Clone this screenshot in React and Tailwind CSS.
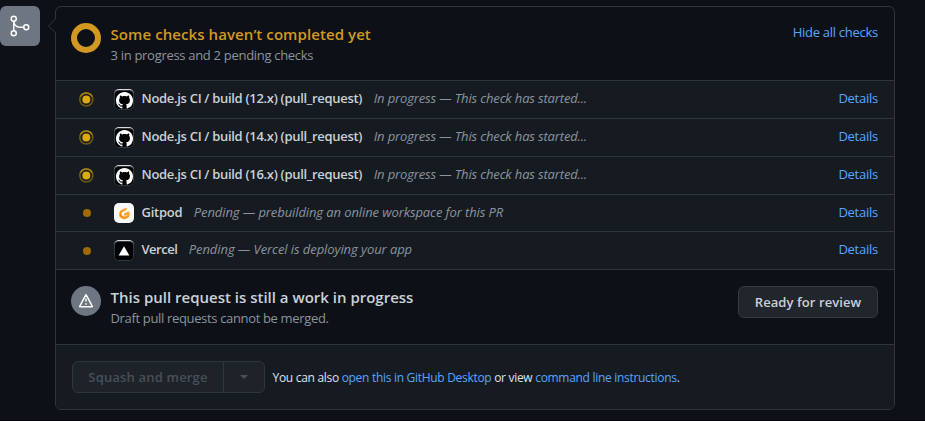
import { GoGitMerge } from "react-icons/go";

function RunningIcon() {
  return (
    <svg className="size-4 shrink-0" viewBox="0 0 16 16" fill="none">
      <circle cx="8.3" cy="7.5" r="6.5" stroke="#6f5713" strokeWidth="1.6" />
      <path d="M2.5 4.5a6.5 6.5 0 0 1 11.6 0" stroke="#a88412" strokeWidth="1.6" />
      <circle cx="8.3" cy="7.5" r="4" fill="#dbab0a" />
    </svg>
  );
}

function PendingDot() {
  return <span className="mr-[3px] ml-[5px] size-2 shrink-0 rounded-full bg-[#9e6a03]" />;
}

function GithubAvatar() {
  return (
    <span className="flex h-[21px] w-5 items-center justify-center rounded-[5px] border-t border-t-[#d8dadc] bg-black ring-1 ring-[#33383e] ring-inset">
      <svg className="size-[17px] shrink-0" viewBox="0 0 16 16" fill="#fff">
        <path d="M8 0C3.58 0 0 3.58 0 8c0 3.54 2.29 6.53 5.47 7.59.4.07.55-.17.55-.38 0-.19-.01-.82-.01-1.49-2.01.37-2.53-.49-2.69-.94-.09-.23-.48-.94-.82-1.13-.28-.15-.68-.52-.01-.53.63-.01 1.08.58 1.23.82.72 1.21 1.87.87 2.33.66.07-.52.28-.87.51-1.07-1.78-.2-3.64-.89-3.64-3.95 0-.87.31-1.59.82-2.15-.08-.2-.36-1.02.08-2.12 0 0 .67-.21 2.2.82.64-.18 1.32-.27 2-.27s1.36.09 2 .27c1.53-1.04 2.2-.82 2.2-.82.44 1.1.16 1.92.08 2.12.51.56.82 1.27.82 2.15 0 3.07-1.87 3.75-3.65 3.95.29.25.54.73.54 1.48 0 1.07-.01 1.93-.01 2.2 0 .21.15.46.55.38A8.01 8.01 0 0 0 16 8c0-4.42-3.58-8-8-8z" />
      </svg>
    </span>
  );
}

function GitpodAvatar() {
  return (
    <span className="flex size-5 items-center justify-center rounded-[5px] bg-[#f9f9f9]">
      <svg className="size-[13px]" viewBox="0 0 14 14" fill="none" stroke="url(#gitpod)" strokeWidth="2.5" strokeLinecap="round" strokeLinejoin="round">
        <defs>
          <linearGradient id="gitpod" x1="1" y1="0" x2="0" y2="1">
            <stop offset="0" stopColor="#ffb03a" />
            <stop offset="1" stopColor="#ff8a00" />
          </linearGradient>
        </defs>
        <path d="M8.4 2.2 3.5 4.9Q2.7 5.4 2.7 6.2v2.7q0 .8.7 1.2L6.3 11.7q.7.4 1.4 0l2.9-1.6q.7-.4.7-1.2V6L7.5 8" />
      </svg>
    </span>
  );
}

function VercelAvatar() {
  return (
    <span className="flex h-[21px] w-5 items-center justify-center rounded-[5px] border-t border-t-[#d8dadc] bg-black ring-1 ring-[#33383e] ring-inset">
      <svg className="size-3" viewBox="0 0 12 12" fill="#fff">
        <path d="M6 1.2 11.4 10.6H.6z" />
      </svg>
    </span>
  );
}

const started = "In progress — This check has started...";

const checks = [
  { name: "Node.js CI / build (12.x) (pull_request)", note: started, icon: RunningIcon, avatar: GithubAvatar, row: "h-[38px]", lift: "pb-0.5", nameCls: "tracking-[-0.3px]", noteCls: "tracking-[-0.15px]" },
  { name: "Node.js CI / build (14.x) (pull_request)", note: started, icon: RunningIcon, avatar: GithubAvatar, row: "h-[38px]", lift: "pb-0.5", nameCls: "tracking-[-0.3px]", noteCls: "tracking-[-0.15px]" },
  { name: "Node.js CI / build (16.x) (pull_request)", note: started, icon: RunningIcon, avatar: GithubAvatar, row: "h-[38px]", lift: "pb-0.5", nameCls: "tracking-[-0.3px]", noteCls: "tracking-[-0.15px]" },
  { name: "Gitpod", note: "Pending — prebuilding an online workspace for this PR", icon: PendingDot, avatar: GitpodAvatar, row: "h-[37px]", lift: "pb-0", nameCls: "tracking-[-0.25px]", noteCls: "tracking-[-0.1px]" },
  { name: "Vercel", note: "Pending — Vercel is deploying your app", icon: PendingDot, avatar: VercelAvatar, row: "h-[38px]", lift: "pb-0.5", nameCls: "tracking-[-0.5px]", noteCls: "tracking-[-0.08px]" },
];

function CheckRow({ name, note, icon: Icon, avatar: Avatar, row, lift, nameCls, noteCls }) {
  return (
    <div className={`flex items-center border-b border-[#30363d] bg-[#161b22] pr-4 pl-[22px] whitespace-nowrap ${row}`}>
      <Icon />
      <div className="ml-5">
        <Avatar />
      </div>
      <span className={`ml-[7.5px] text-[13px] font-semibold text-[#c9d1d9] ${lift} ${nameCls}`}>{name}</span>
      <span className={`ml-[11.5px] text-[13px] text-[#8b949e] italic ${lift} ${noteCls}`}>{note}</span>
      <a className={`ml-auto text-[13px] tracking-[-0.25px] text-[#58a6ff] ${lift}`}>Details</a>
    </div>
  );
}

export default function App() {
  return (
    <div className="flex h-[421px] w-[925px] overflow-hidden border-b border-[#04050a] bg-[#0d1117] pt-1.5 font-['Open_Sans','Noto_Sans',sans-serif] text-[#c9d1d9]">
      <div className="flex size-10 shrink-0 items-center justify-center rounded-md bg-[#6e7681] text-white">
        <GoGitMerge className="size-6" />
      </div>
      <div className="relative ml-[15px] h-[404px] w-[840px] rounded-md border border-[#30363d]">
        <svg className="absolute top-[11px] -left-2 h-4 w-2" viewBox="0 0 8 16">
          <path d="M8 .5.5 8 8 15.5z" fill="#0d1117" />
          <path d="M8 .5.5 8 8 15.5" fill="none" stroke="#30363d" />
        </svg>
        <div className="flex h-[74px] border-b border-[#30363d] pt-[15px] pr-4 pl-[15px] whitespace-nowrap">
          <span className="mt-px size-[30px] rounded-full border-[6px] border-[#d29922]" />
          <div className="ml-[9.5px]">
            <h3 className="text-[15px] leading-6 font-semibold tracking-[0.08px] text-[#d29922]">Some checks haven’t completed yet</h3>
            <p className="text-[13px] leading-[18px] tracking-[-0.3px] text-[#8b949e]">3 in progress and 2 pending checks</p>
          </div>
          <a className="ml-auto text-[13px] leading-5 tracking-[-0.27px] text-[#58a6ff]">Hide all checks</a>
        </div>
        {checks.map((check) => (
          <CheckRow key={check.name} {...check} />
        ))}
        <div className="flex h-[75px] border-b border-[#30363d] pt-[15px] pr-4 pl-[15px] whitespace-nowrap">
          <span className="mt-px flex size-[30px] items-center justify-center rounded-full bg-[#6e7681] text-white">
            <svg className="size-4" viewBox="0 0 16 16" fill="none" stroke="#fff" strokeWidth="1.5" strokeLinejoin="round">
              <path d="M7.78 1.9a.25.25 0 0 1 .44 0l6.08 11.4a.25.25 0 0 1-.22.37H1.92a.25.25 0 0 1-.22-.37z" />
              <path d="M8 5.6v3M8 10.2v1.6" />
            </svg>
          </span>
          <div className="ml-[9.5px]">
            <h3 className="text-[15px] leading-6 font-semibold">This pull request is still a work in progress</h3>
            <p className="text-[13px] leading-[18px] tracking-[-0.34px] text-[#8b949e]">Draft pull requests cannot be merged.</p>
          </div>
          <button className="mt-px ml-auto h-8 w-[140px] rounded-md border border-[#363b42] bg-[#21262d] pt-0.5 text-[13px] font-semibold tracking-[0.08px]">Ready for review</button>
        </div>
        <div className="flex h-[64px] items-center rounded-b-[5px] bg-[#161b22] pl-4 whitespace-nowrap">
          <div className="flex h-8 w-[193px] rounded-md border border-[#30363d] bg-[#1e2329] text-[#484f58]">
            <span className="flex w-[151px] items-center justify-center border-r border-[#30363d] pt-0.5 text-[13px] font-semibold tracking-[0.18px]">Squash and merge</span>
            <span className="flex flex-1 items-center justify-center">
              <span className="border-x-4 border-t-4 border-x-transparent border-t-[#484f58]" />
            </span>
          </div>
          <p className="ml-[7.5px] pt-0.5 text-[12px] tracking-[-0.3px]">
            <span className="text-[#dde3ea]">You can also </span>
            <a className="text-[#58a6ff]">open this in GitHub Desktop</a>
            <span className="text-[#dde3ea]"> or view </span>
            <a className="text-[#58a6ff]">command line instructions</a>.
          </p>
        </div>
      </div>
    </div>
  );
}
